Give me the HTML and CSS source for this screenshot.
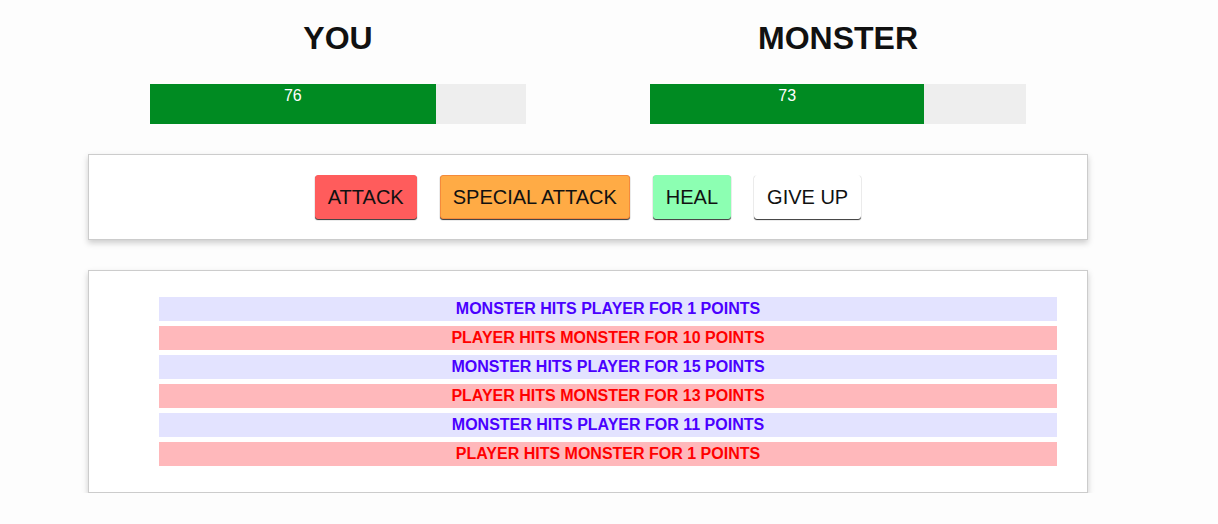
FILE: index.html
```html
<!DOCTYPE html>
<html>
<head>
<meta charset="utf-8">
<link rel="stylesheet" href="styles.css">
</head>
<body>
<div class="app">
  <section class="row">
    <div class="col">
      <h1 class="title">YOU</h1>
      <div class="healthbar"><div class="fill" style="width:76%">76</div></div>
    </div>
    <div class="col">
      <h1 class="title">MONSTER</h1>
      <div class="healthbar"><div class="fill" style="width:73%">73</div></div>
    </div>
  </section>
  <section class="controls">
    <button class="btn attack">ATTACK</button>
    <button class="btn special">SPECIAL ATTACK</button>
    <button class="btn heal">HEAL</button>
    <button class="btn giveup">GIVE UP</button>
  </section>
  <section class="log">
    <ul class="log-list">
      <li class="entry monster-turn">MONSTER HITS PLAYER FOR 1 POINTS</li>
      <li class="entry player-turn">PLAYER HITS MONSTER FOR 10 POINTS</li>
      <li class="entry monster-turn">MONSTER HITS PLAYER FOR 15 POINTS</li>
      <li class="entry player-turn">PLAYER HITS MONSTER FOR 13 POINTS</li>
      <li class="entry monster-turn">MONSTER HITS PLAYER FOR 11 POINTS</li>
      <li class="entry player-turn">PLAYER HITS MONSTER FOR 1 POINTS</li>
    </ul>
  </section>
</div>
</body>
</html>
```

FILE: styles.css
```css
html, body {
  margin: 0;
  padding: 0;
  background: #fdfdfd;
  font-family: "Liberation Sans", Arial, sans-serif;
}
.app {
  width: 1000px;
  margin-left: 88px;
  padding-top: 20px;
}
.row {
  display: flex;
}
.col {
  width: 500px;
  padding: 0 15px;
  box-sizing: border-box;
  text-align: center;
}
.title {
  margin: 0;
  font-size: 32px;
  line-height: 36px;
  font-weight: bold;
  color: #111;
}
.healthbar {
  width: 80%;
  height: 40px;
  margin: 28px auto 0;
  background: #eeeeee;
}
.fill {
  height: 100%;
  background: #008b22;
  color: #ffffff;
  font-size: 16px;
  line-height: 24px;
  text-align: center;
}
.controls {
  margin-top: 30px;
  background: #ffffff;
  border: 1px solid #cccccc;
  box-shadow: 0 3px 6px #cccccc;
  padding: 20px 10px;
  display: flex;
  justify-content: center;
  gap: 23px;
}
.btn {
  font-family: "Liberation Sans", Arial, sans-serif;
  font-size: 20px;
  line-height: 23px;
  padding: 10px 12px 9px;
  border: 1px solid transparent;
  border-radius: 3px;
  box-shadow: 0 1px 1px #333;
  color: #111;
  cursor: pointer;
}
.attack {
  background: #ff5c5c;
  border-color: #ff5c5c;
}
.special {
  background: #ffab45;
  border-color: #f58a3a;
}
.heal {
  background: #8cffb2;
  border-color: #8cffb2;
}
.giveup {
  background: #ffffff;
  border-color: #ffffff;
}
.log {
  margin-top: 30px;
  background: #ffffff;
  border: 1px solid #cccccc;
  box-shadow: 0 3px 6px #cccccc;
  padding: 10px;
}
.log-list {
  list-style: none;
  margin: 16px 0;
  padding: 0 0 0 40px;
}
.entry {
  margin: 5px 20px;
  height: 24px;
  line-height: 24px;
  font-size: 16px;
  font-weight: bold;
  text-align: center;
}
.monster-turn {
  background: #e3e3ff;
  color: #4a00ff;
}
.player-turn {
  background: #ffb8bb;
  color: #ff0000;
}
```
